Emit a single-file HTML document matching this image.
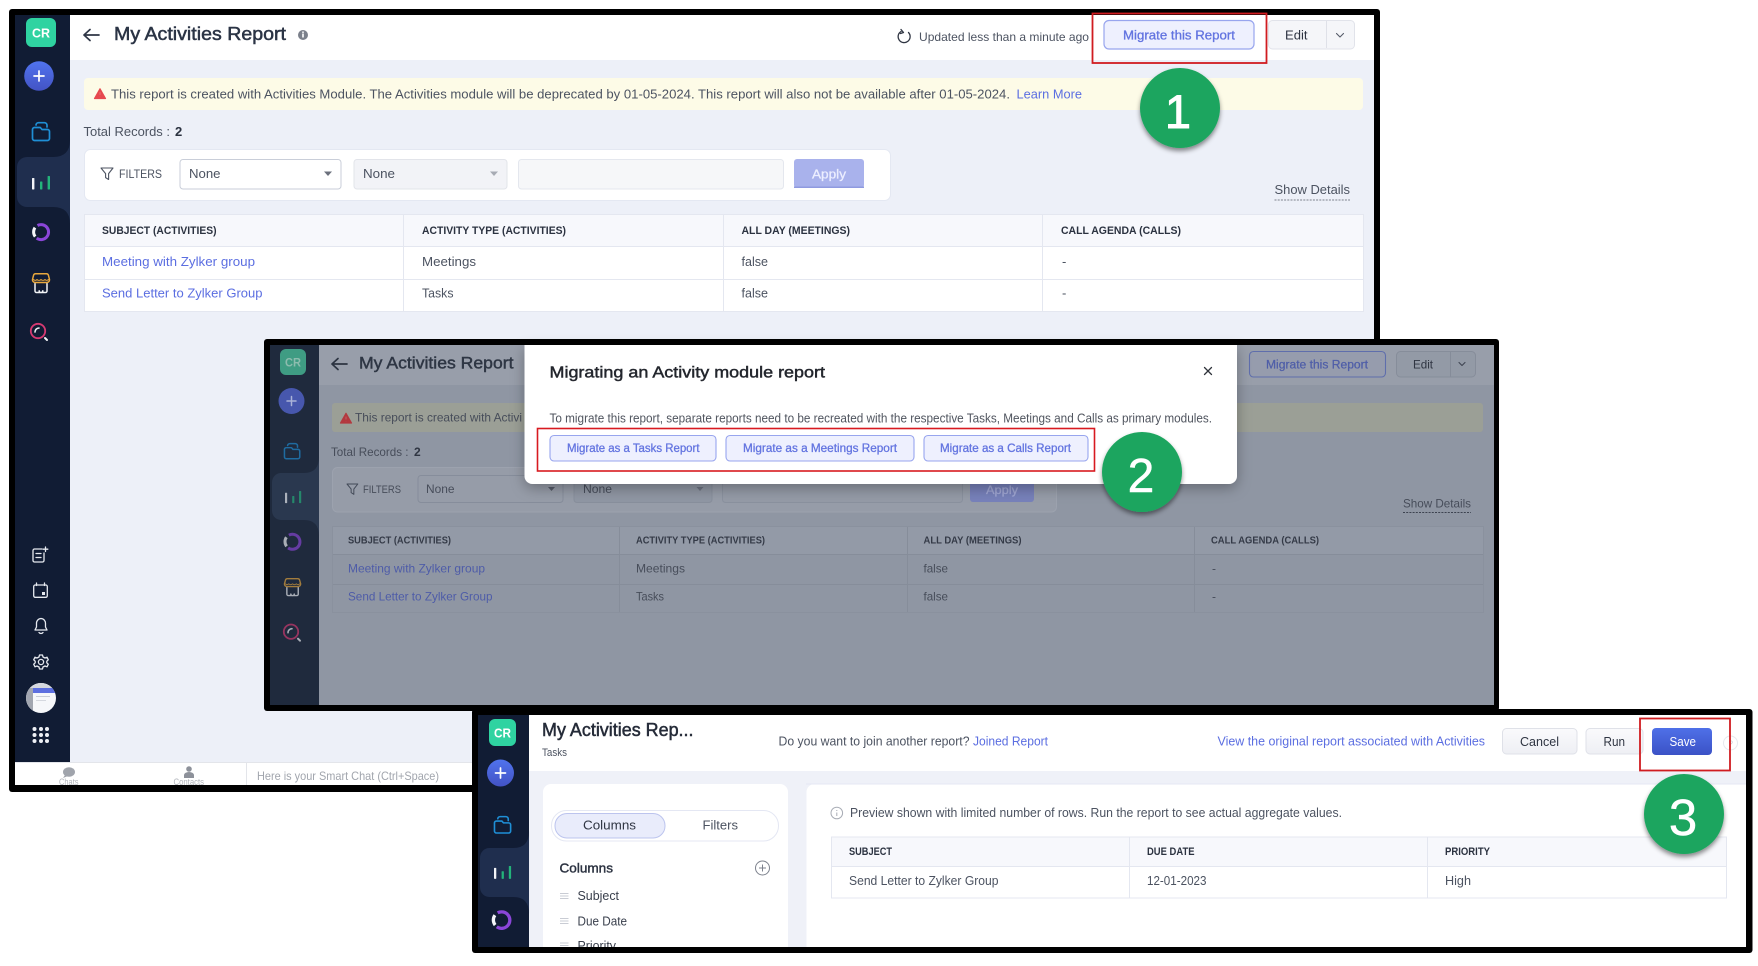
<!DOCTYPE html>
<html lang="en">
<head>
<meta charset="utf-8">
<title>Migrating an Activities report</title>
<style>
html,body{margin:0;padding:0;background:#fff;width:1758px;height:966px;overflow:hidden}
svg{display:block;filter:blur(.35px)}
text{font-family:"Liberation Sans",sans-serif;font-size:13px;fill:#4c5361}
.b{font-weight:700}
.h{font-weight:700;font-size:11px;fill:#2b3240}
.l{fill:#5b6ee1}
.s{font-size:12px}
.w{fill:#fff}
.dt{fill:#474d5a}
.dh{font-weight:700;font-size:10.5px;fill:#343a47}
.dl{fill:#4e5ca8}
.ln{fill:none;stroke-linecap:round;stroke-linejoin:round}
.btn{font-size:12.5px;fill:#6374e0;stroke:#6374e0;stroke-width:.3}
.num{fill:#fff;stroke:#fff;stroke-width:.9}
</style>
</head>
<body>
<svg width="1758" height="966" viewBox="0 0 1758 966" xmlns="http://www.w3.org/2000/svg">
<defs>
<linearGradient id="gp" x1="0" y1="0" x2="0" y2="1"><stop offset="0" stop-color="#5073ee"/><stop offset="1" stop-color="#4353c4"/></linearGradient>
<linearGradient id="gs" x1="0" y1="0" x2="0" y2="1"><stop offset="0" stop-color="#4f70e8"/><stop offset="1" stop-color="#3b52c6"/></linearGradient>
<linearGradient id="gb" x1="0" y1="0" x2="0" y2="1"><stop offset="0" stop-color="#fafafc"/><stop offset="1" stop-color="#eeeff4"/></linearGradient>
<filter id="sh" x="-30%" y="-30%" width="160%" height="170%"><feDropShadow dx="0" dy="3" stdDeviation="2.5" flood-color="#000" flood-opacity=".45"/></filter>
<filter id="ms" x="-10%" y="-20%" width="120%" height="150%"><feDropShadow dx="0" dy="4" stdDeviation="7" flood-color="#000" flood-opacity=".3"/></filter>

<path id="tab" d="M53 -17Q53 0 36 0H10A10 10 0 0 0 0 10V40A10 10 0 0 0 10 50H36Q53 50 53 67Z"/>
<g id="folder" class="ln" stroke="#1f8fd6" stroke-width="1.7">
  <path d="M2.5 18.5H15.5A2 2 0 0 0 17.5 16.5V9.5A2 2 0 0 0 15.5 7.5H10L8.3 5.5H2.5A2 2 0 0 0 .5 7.5V16.5A2 2 0 0 0 2.5 18.5Z"/>
  <path d="M4 3A2.5 2.5 0 0 1 6.5 .7H12.5A2.5 2.5 0 0 1 15 3.2V5"/>
</g>
<g id="bars">
  <rect x="0" y="2" width="2.4" height="11.5" rx=".6" fill="#f2f4f7"/>
  <rect x="8" y="5.5" width="2.4" height="8" rx=".6" fill="#23b37a"/>
  <rect x="15.6" y="0" width="2.4" height="13.5" rx=".6" fill="#23b37a"/>
</g>
<g id="donut" fill="none" stroke-width="3">
  <path d="M-3.5 -6.5A7.5 7.5 0 1 1 -4.3 6.2" stroke="#8b46d8"/>
  <path d="M-5.8 4.6A7.5 7.5 0 0 1 -6 -4.4" stroke="#f4f5f8"/>
</g>
<g id="store" class="ln" stroke-width="1.5">
  <path d="M3 10.5V18A1.5 1.5 0 0 0 4.5 19.5H13.5A1.5 1.5 0 0 0 15 18V10.5M7.2 19.5V17.8A1.8 1.8 0 0 0 10.8 17.8V19.5" stroke="#f2f4f7"/>
  <path d="M3.5 .8H14.5A2 2 0 0 1 16.4 2.2L17.5 6.5A2.8 2.8 0 0 1 15 9.5H3A2.8 2.8 0 0 1 .5 6.5L1.6 2.2A2 2 0 0 1 3.5 .8Z" stroke="#e9a83d"/>
  <path d="M1.5 6.5Q3.2 8.3 5 6.5Q7 8.3 9 6.5Q11 8.3 13 6.5Q14.8 8.3 16.5 6.5" stroke="#e9a83d" stroke-width="1"/>
</g>
<g id="search" class="ln">
  <circle cx="0" cy="0" r="7.2" stroke="#d83a72" stroke-width="1.8"/>
  <path d="M-3 1A4 4 0 0 1 1-3" stroke="#f3f4f7" stroke-width="1.6"/>
  <path d="M7 7L9 9" stroke="#f3f4f7" stroke-width="2"/>
</g>
<g id="warn"><path d="M6 .8L11.5 10.5H.5Z" stroke-linejoin="round" stroke-width="1.2"/><rect x="5.4" y="3.6" width="1.2" height="3.8" fill="#fff"/><rect x="5.4" y="8.2" width="1.2" height="1.2" fill="#fff"/></g>
<path id="arrow" class="ln" stroke-width="1.7" d="M0 0H15M0 0L6 -5.5M0 0L6 5.5"/>
<path id="funnel" class="ln" stroke-width="1.1" d="M0 0H12L7.6 5.6V11.5L4.6 9.6V5.6Z"/>
</defs>

<!-- white page -->
<rect width="1758" height="966" fill="#fff"/>

<!-- PANEL 1 -->
<rect x="9" y="9" width="1371" height="783" rx="3" fill="#000"/>
<rect x="15" y="15" width="1359" height="770" fill="#edf0f8"/>
<rect x="70" y="15" width="1304" height="45" fill="#fff"/>
<rect x="15" y="15" width="55" height="748" fill="#111c34"/>
<use href="#tab" x="17" y="157" fill="#1f2e4e"/>
<rect x="15" y="763" width="460" height="22" fill="#fff"/>
<rect x="15" y="762" width="460" height="1" fill="#e3e5ea"/>

<rect x="26" y="18" width="30" height="29" rx="6" fill="#2fd3a1"/>
<text x="32" y="37.5" class="b w" style="font-size:13px" textLength="18" lengthAdjust="spacingAndGlyphs">CR</text>
<circle cx="39" cy="76" r="14.8" fill="url(#gp)"/>
<path d="M39 71V81M34 76H44" stroke="#fff" stroke-width="1.7" stroke-linecap="round"/>
<use href="#folder" x="32" y="122"/>
<use href="#bars" x="32" y="176"/>
<use href="#donut" x="41" y="232"/>
<use href="#store" x="32" y="273"/>
<use href="#search" x="38" y="331"/>
<g class="ln" stroke="#e6e9ef" stroke-width="1.3">
  <path d="M42 549H34.5A1.5 1.5 0 0 0 33 550.5V560.5A1.5 1.5 0 0 0 34.5 562H42.5A1.5 1.5 0 0 0 44 560.5V553M36 553.5H41M36 557.5H41M45.5 547V551.5M43.2 549.2H47.8"/>
  <rect x="33.7" y="585" width="13.6" height="12.3" rx="1.5"/><path d="M36.5 583V585.5M44.5 583V585.5"/>
  <path d="M41 618.5A4.8 4.8 0 0 1 45.5 623.5V627L47 630H35L36.5 627V623.5A4.8 4.8 0 0 1 41 618.5ZM39 632.5A2.5 2.5 0 0 0 43 632.5"/>
  <circle cx="41" cy="662" r="2.6"/>
  <path d="M39.5 655H42.5L43 657L45 658L47 657.2L48.3 659.8L46.8 661.2V662.8L48.3 664.2L47 666.8L45 666L43 667L42.5 669H39.5L39 667L37 666L35 666.8L33.7 664.2L35.2 662.8V661.2L33.7 659.8L35 657.2L37 658L39 657Z"/>
</g>
<rect x="42" y="592" width="3" height="3" fill="#e6e9ef"/>
<clipPath id="av"><circle cx="41" cy="698" r="15"/></clipPath>
<g clip-path="url(#av)">
  <rect x="26" y="683" width="30" height="30" fill="#f6f7fa"/>
  <rect x="26" y="683" width="30" height="5" fill="#d5d8df"/>
  <rect x="26" y="688" width="7" height="25" fill="#a2a6b0"/>
  <rect x="33" y="688" width="23" height="5" fill="#5d6fe0"/>
  <rect x="36" y="696" width="14" height="1" fill="#c9cdd6"/>
  <rect x="36" y="700" width="10" height="1" fill="#d5d8df"/>
</g>
<g fill="#eef0f5"><circle cx="34.5" cy="729" r="2"/><circle cx="41" cy="729" r="2"/><circle cx="47" cy="729" r="2"/><circle cx="34.5" cy="735" r="2"/><circle cx="41" cy="735" r="2"/><circle cx="47" cy="735" r="2"/><circle cx="34.5" cy="741" r="2"/><circle cx="41" cy="741" r="2"/><circle cx="47" cy="741" r="2"/></g>

<ellipse cx="69" cy="772" rx="6" ry="4.8" fill="#a0a4ac"/><path d="M65 775L63 778L68 776Z" fill="#a0a4ac"/>
<text x="59" y="785" style="font-size:9px;fill:#b0b3ba" textLength="19.5" lengthAdjust="spacingAndGlyphs">Chats</text>
<circle cx="189" cy="769" r="2.8" fill="#8d919a"/><path d="M184 778V775A5 3 0 0 1 194 775V778Z" fill="#8d919a"/>
<text x="173.5" y="785" style="font-size:9px;fill:#b0b3ba" textLength="30.5" lengthAdjust="spacingAndGlyphs">Contacts</text>
<rect x="246" y="763" width="1" height="22" fill="#e3e5ea"/>
<text x="257" y="780" class="s" style="fill:#a1a5ad" textLength="182" lengthAdjust="spacingAndGlyphs">Here is your Smart Chat (Ctrl+Space)</text>

<use href="#arrow" x="84" y="35" stroke="#2e3646"/>
<text x="114" y="40" style="font-size:18px;fill:#2b3445;stroke:#2b3445;stroke-width:.5" textLength="172" lengthAdjust="spacingAndGlyphs">My Activities Report</text>
<circle cx="303" cy="35" r="5" fill="#7b808b"/><rect x="302.2" y="33.5" width="1.6" height="4" fill="#fff"/><rect x="302.2" y="31.5" width="1.6" height="1.4" fill="#fff"/>

<path class="ln" stroke="#2f3542" stroke-width="1.3" d="M901 31.5A6 6 0 1 0 908.5 32.5M901 29.5L903.5 32.5L900.5 33.5"/>
<text x="919" y="41" class="s" textLength="170" lengthAdjust="spacingAndGlyphs">Updated less than a minute ago</text>
<rect x="1104" y="20.5" width="150" height="28.5" rx="5" fill="#eef0fe" stroke="#98a5ee" stroke-width="1.2"/>
<text x="1123" y="39.5" class="btn" textLength="112" lengthAdjust="spacingAndGlyphs">Migrate this Report</text>
<rect x="1268.5" y="20.5" width="86" height="28.5" rx="4" fill="#f5f6f9" stroke="#e1e3ea"/>
<rect x="1326" y="21" width="1" height="27" fill="#dfe1e8"/>
<text x="1285" y="39.5" style="font-size:13px;fill:#2e3442" textLength="22.5" lengthAdjust="spacingAndGlyphs">Edit</text>
<path class="ln" stroke="#555b68" stroke-width="1.1" d="M1336.5 33.5L1340 37L1343.5 33.5"/>
<rect x="1092.5" y="13.5" width="174" height="49.5" fill="none" stroke="#d01c20" stroke-width="1.8"/>

<rect x="84" y="78" width="1279" height="32" rx="4" fill="#fdfbe7"/>
<use href="#warn" x="94" y="88" fill="#e6494e" stroke="#e6494e"/>
<text x="111" y="98.5" textLength="899" lengthAdjust="spacingAndGlyphs">This report is created with Activities Module. The Activities module will be deprecated by 01-05-2024. This report will also not be available after 01-05-2024.</text>
<text x="1016.5" y="98.5" class="l" textLength="65.5" lengthAdjust="spacingAndGlyphs">Learn More</text>

<text x="83.5" y="136" textLength="86.5" lengthAdjust="spacingAndGlyphs">Total Records :</text>
<text x="175" y="136" class="b" style="fill:#2b3240">2</text>

<rect x="84.5" y="149.5" width="806" height="51" rx="6" fill="#fff" stroke="#e4e8f2"/>
<use href="#funnel" x="101" y="168" stroke="#4c5361"/>
<text x="119" y="178" class="s" textLength="43" lengthAdjust="spacingAndGlyphs">FILTERS</text>
<rect x="180" y="159.5" width="161" height="29.5" rx="3" fill="#fff" stroke="#c9ced9"/>
<text x="189" y="178" style="font-size:13px" textLength="31.5" lengthAdjust="spacingAndGlyphs">None</text>
<path d="M324 171.5H332L328 176Z" fill="#6b707c"/>
<rect x="354" y="159.5" width="153" height="29.5" rx="3" fill="#f2f3f7" stroke="#e2e4ea"/>
<text x="363" y="178" style="font-size:13px" textLength="32" lengthAdjust="spacingAndGlyphs">None</text>
<path d="M490 171.5H498L494 176Z" fill="#a7abb4"/>
<rect x="518.5" y="159.5" width="265" height="29.5" rx="3" fill="#f6f7f9" stroke="#e4e7ee"/>
<rect x="794" y="159" width="70" height="29" rx="3" fill="#a9b2ec"/>
<rect x="794" y="186.5" width="70" height="1.5" fill="#8f9ae0"/>
<text x="812" y="178.5" style="font-size:13px;fill:#eceeff;stroke:#eceeff;stroke-width:.3" textLength="34" lengthAdjust="spacingAndGlyphs">Apply</text>
<text x="1274.5" y="194" textLength="75.5" lengthAdjust="spacingAndGlyphs">Show Details</text>
<path d="M1274.5 200H1350" stroke="#7d828d" stroke-dasharray="2 1.2"/>

<rect x="84.5" y="214.5" width="1279" height="97" fill="#fff" stroke="#e4e7f0"/>
<rect x="85" y="215" width="1278" height="31" fill="#f7f8fc"/>
<path d="M85 246.5H1363M85 279.5H1363M403.5 215V311M723.5 215V311M1042.5 215V311" stroke="#e4e7f0" fill="none"/>
<text x="102" y="234" class="h" textLength="114.5" lengthAdjust="spacingAndGlyphs">SUBJECT (ACTIVITIES)</text>
<text x="422" y="234" class="h" textLength="144" lengthAdjust="spacingAndGlyphs">ACTIVITY TYPE (ACTIVITIES)</text>
<text x="741.5" y="234" class="h" textLength="108.5" lengthAdjust="spacingAndGlyphs">ALL DAY (MEETINGS)</text>
<text x="1061" y="234" class="h" textLength="120" lengthAdjust="spacingAndGlyphs">CALL AGENDA (CALLS)</text>
<text x="102" y="266" class="l" textLength="153" lengthAdjust="spacingAndGlyphs">Meeting with Zylker group</text>
<text x="422" y="266" textLength="54" lengthAdjust="spacingAndGlyphs">Meetings</text>
<text x="741.5" y="266" textLength="26.5" lengthAdjust="spacingAndGlyphs">false</text>
<text x="1062" y="266">-</text>
<text x="102" y="297.5" class="l" textLength="160.5" lengthAdjust="spacingAndGlyphs">Send Letter to Zylker Group</text>
<text x="422" y="297.5" textLength="31.5" lengthAdjust="spacingAndGlyphs">Tasks</text>
<text x="741.5" y="297.5" textLength="26.5" lengthAdjust="spacingAndGlyphs">false</text>
<text x="1062" y="297.5">-</text>

<g filter="url(#sh)"><circle cx="1180" cy="108" r="40" fill="#1fa55f"/></g>
<text x="1178" y="128" text-anchor="middle" class="num" style="font-size:47px">1</text>

<!-- PANEL 2 -->
<rect x="264" y="339" width="1235" height="372" rx="3" fill="#000"/>
<rect x="270" y="345" width="1224" height="360" fill="#8f96a3"/>
<rect x="319" y="345" width="1175" height="40" fill="#989eaa"/>
<rect x="270" y="345" width="49" height="360" fill="#1f2a3d"/>
<use href="#tab" transform="translate(272 473) scale(.887 .94)" fill="#2a384f"/>
<rect x="280" y="349" width="26" height="26" rx="6" fill="#3f9c83"/>
<text x="285" y="366.5" class="b" style="font-size:12px;fill:#8dbcae" textLength="16" lengthAdjust="spacingAndGlyphs">CR</text>
<circle cx="291.5" cy="401" r="13" fill="#4757ad"/>
<path d="M291.5 396.5V405.5M287 401H296" stroke="#aab2d8" stroke-width="1.5" stroke-linecap="round"/>
<g opacity=".65">
  <use href="#folder" transform="translate(284 443) scale(.9 .85)"/>
  <use href="#bars" transform="translate(285 491) scale(.9)"/>
  <use href="#donut" x="292.4" y="541.7"/>
  <use href="#store" transform="translate(284 578) scale(.95 .9)"/>
  <use href="#search" x="291" y="631.7"/>
</g>
<use href="#arrow" x="332" y="364" stroke="#2c3442"/>
<text x="359" y="368.5" style="font-size:16.5px;fill:#2e3644;stroke:#2e3644;stroke-width:.45" textLength="154.5" lengthAdjust="spacingAndGlyphs">My Activities Report</text>

<rect x="332" y="403" width="1151" height="29" rx="3" fill="#9b9f96"/>
<use href="#warn" x="340" y="412.5" fill="#b3393f" stroke="#b3393f"/>
<text x="355" y="421.5" class="dt" style="font-size:12px" textLength="167" lengthAdjust="spacingAndGlyphs">This report is created with Activi</text>
<text x="331" y="456" class="dt" style="font-size:12px" textLength="77.5" lengthAdjust="spacingAndGlyphs">Total Records :</text>
<text x="414" y="456" class="b" style="font-size:12px;fill:#2f3542">2</text>

<rect x="332.5" y="467.5" width="724" height="44.5" rx="5" fill="#969ca8" stroke="#9ca2ae"/>
<use href="#funnel" transform="translate(347 484) scale(.9)" stroke="#434a58"/>
<text x="363" y="493" class="dt" style="font-size:11px" textLength="38" lengthAdjust="spacingAndGlyphs">FILTERS</text>
<rect x="418" y="475.5" width="145" height="27" rx="3" fill="#969ca8" stroke="#868d9b"/>
<text x="426" y="493" class="dt" style="font-size:12px" textLength="28.5" lengthAdjust="spacingAndGlyphs">None</text>
<path d="M548 487H555L551.5 491Z" fill="#555b68"/>
<rect x="574" y="475.5" width="138" height="27" rx="3" fill="#8f96a3" stroke="#888f9c"/>
<text x="583" y="493" class="dt" style="font-size:12px" textLength="29" lengthAdjust="spacingAndGlyphs">None</text>
<path d="M696.5 487H703.5L700 491Z" fill="#6c7280"/>
<rect x="722.5" y="475.5" width="240" height="27" rx="3" fill="#949aa6" stroke="#8a919e"/>
<rect x="970" y="475" width="64" height="27" rx="3" fill="#7781ba"/>
<text x="986" y="494" style="font-size:12px;fill:#a1a7d3;stroke:#a1a7d3;stroke-width:.25" textLength="32" lengthAdjust="spacingAndGlyphs">Apply</text>
<text x="1403" y="507.5" class="dt" style="font-size:12px" textLength="68" lengthAdjust="spacingAndGlyphs">Show Details</text>
<path d="M1403 512.5H1471" stroke="#3d4350" stroke-dasharray="2 1.2"/>

<rect x="332.5" y="526.5" width="1151" height="86" fill="#8f96a3" stroke="#8a919e"/>
<rect x="333" y="527" width="1150" height="27" fill="#939aa7"/>
<path d="M333 554.5H1483M333 584.5H1483M619.5 527V612M907.5 527V612M1194.5 527V612" stroke="#868d9a" fill="none"/>
<text x="348" y="543.5" class="dh" textLength="103" lengthAdjust="spacingAndGlyphs">SUBJECT (ACTIVITIES)</text>
<text x="636" y="543.5" class="dh" textLength="129" lengthAdjust="spacingAndGlyphs">ACTIVITY TYPE (ACTIVITIES)</text>
<text x="923.5" y="543.5" class="dh" textLength="98" lengthAdjust="spacingAndGlyphs">ALL DAY (MEETINGS)</text>
<text x="1211" y="543.5" class="dh" textLength="108" lengthAdjust="spacingAndGlyphs">CALL AGENDA (CALLS)</text>
<text x="348" y="572.5" class="dl" style="font-size:12px" textLength="137" lengthAdjust="spacingAndGlyphs">Meeting with Zylker group</text>
<text x="636" y="572.5" class="dt" style="font-size:12px" textLength="49" lengthAdjust="spacingAndGlyphs">Meetings</text>
<text x="923.5" y="572.5" class="dt" style="font-size:12px" textLength="24.5" lengthAdjust="spacingAndGlyphs">false</text>
<text x="1212" y="572.5" class="dt" style="font-size:12px">-</text>
<text x="348" y="600.5" class="dl" style="font-size:12px" textLength="144.5" lengthAdjust="spacingAndGlyphs">Send Letter to Zylker Group</text>
<text x="636" y="600.5" class="dt" style="font-size:12px" textLength="28" lengthAdjust="spacingAndGlyphs">Tasks</text>
<text x="923.5" y="600.5" class="dt" style="font-size:12px" textLength="24.5" lengthAdjust="spacingAndGlyphs">false</text>
<text x="1212" y="600.5" class="dt" style="font-size:12px">-</text>

<rect x="1249.5" y="351.5" width="136" height="25.5" rx="4" fill="#969cad" stroke="#5f6eac" stroke-width="1.1"/>
<text x="1266" y="368.5" style="font-size:11.5px;fill:#4f5ea8;stroke:#4f5ea8;stroke-width:.25" textLength="102" lengthAdjust="spacingAndGlyphs">Migrate this Report</text>
<rect x="1396.5" y="351.5" width="79" height="25.5" rx="4" fill="#939aa6" stroke="#868d9a"/>
<rect x="1450" y="352" width="1" height="24.5" fill="#858c99"/>
<text x="1413" y="368.5" class="dt" style="font-size:12px;fill:#2f3542" textLength="20" lengthAdjust="spacingAndGlyphs">Edit</text>
<path class="ln" stroke="#3f4552" stroke-width="1.1" d="M1459 362.5L1462 365.5L1465 362.5"/>

<g filter="url(#ms)"><path d="M524.5 345H1237V476A8 8 0 0 1 1229 484H532.5A8 8 0 0 1 524.5 476Z" fill="#fff"/></g>
<text x="549.5" y="377.5" style="font-size:16px;fill:#23262d;stroke:#23262d;stroke-width:.45" textLength="275.5" lengthAdjust="spacingAndGlyphs">Migrating an Activity module report</text>
<path class="ln" stroke="#30343c" stroke-width="1.3" d="M1204.5 367.5L1211.5 374.5M1211.5 367.5L1204.5 374.5"/>
<text x="549.5" y="422.5" style="font-size:12.5px;fill:#50555f" textLength="662.5" lengthAdjust="spacingAndGlyphs">To migrate this report, separate reports need to be recreated with the respective Tasks, Meetings and Calls as primary modules.</text>
<rect x="550" y="435.5" width="166" height="25.5" rx="4" fill="#eef0fe" stroke="#98a5ee" stroke-width="1.1"/>
<text x="567" y="452" class="btn" style="font-size:12px" textLength="132.5" lengthAdjust="spacingAndGlyphs">Migrate as a Tasks Report</text>
<rect x="726" y="435.5" width="188" height="25.5" rx="4" fill="#eef0fe" stroke="#98a5ee" stroke-width="1.1"/>
<text x="743" y="452" class="btn" style="font-size:12px" textLength="154" lengthAdjust="spacingAndGlyphs">Migrate as a Meetings Report</text>
<rect x="924" y="435.5" width="164" height="25.5" rx="4" fill="#eef0fe" stroke="#98a5ee" stroke-width="1.1"/>
<text x="940" y="452" class="btn" style="font-size:12px" textLength="131" lengthAdjust="spacingAndGlyphs">Migrate as a Calls Report</text>
<rect x="537.5" y="428.5" width="557" height="42.5" fill="none" stroke="#d81a20" stroke-width="1.6"/>

<g filter="url(#sh)"><circle cx="1142" cy="472" r="40" fill="#1fa55f"/></g>
<text x="1141" y="492" text-anchor="middle" class="num" style="font-size:48px;stroke-width:.5">2</text>

<!-- PANEL 3 -->
<rect x="472" y="709" width="1280.5" height="244" rx="3" fill="#000"/>
<rect x="478" y="715" width="1268" height="232" fill="#eff1f8"/>
<rect x="529" y="715" width="1217" height="56" fill="#fff"/>
<rect x="478" y="715" width="51" height="232" fill="#111c34"/>
<use href="#tab" transform="translate(480 848) scale(.925 .98)" fill="#1f2e4e"/>
<rect x="489" y="719" width="27" height="27" rx="6" fill="#2fd3a1"/>
<text x="494" y="737.5" class="b w" style="font-size:13px" textLength="17" lengthAdjust="spacingAndGlyphs">CR</text>
<circle cx="500.5" cy="773" r="13.5" fill="url(#gp)"/>
<path d="M500.5 768V778M495.5 773H505.5" stroke="#fff" stroke-width="1.7" stroke-linecap="round"/>
<use href="#folder" transform="translate(494 816) scale(.95 .92)"/>
<use href="#bars" transform="translate(494 866) scale(.95)"/>
<use href="#donut" transform="translate(501.5 920) scale(1.1)"/>

<text x="542" y="736" style="font-size:18px;fill:#252b38;stroke:#252b38;stroke-width:.5" textLength="151.5" lengthAdjust="spacingAndGlyphs">My Activities Rep...</text>
<text x="542" y="756" style="font-size:11px" textLength="25" lengthAdjust="spacingAndGlyphs">Tasks</text>
<text x="778.5" y="745.5" textLength="191" lengthAdjust="spacingAndGlyphs" style="font-size:12.5px">Do you want to join another report?</text>
<text x="973" y="745.5" class="l" textLength="75" lengthAdjust="spacingAndGlyphs" style="font-size:12.5px">Joined Report</text>
<text x="1217.5" y="745.5" class="l" textLength="267.5" lengthAdjust="spacingAndGlyphs" style="font-size:12.5px">View the original report associated with Activities</text>
<rect x="1502.5" y="728.5" width="74.5" height="25.5" rx="4" fill="url(#gb)" stroke="#dfe1e8"/>
<text x="1520" y="746" style="font-size:12.5px;fill:#2f3542" textLength="39" lengthAdjust="spacingAndGlyphs">Cancel</text>
<rect x="1586" y="728.5" width="57" height="25.5" rx="4" fill="url(#gb)" stroke="#dfe1e8"/>
<text x="1603.5" y="746" style="font-size:12.5px;fill:#2f3542" textLength="21.5" lengthAdjust="spacingAndGlyphs">Run</text>
<rect x="1652" y="728" width="60" height="27" rx="4" fill="url(#gs)"/>
<text x="1669.5" y="746" class="w" style="font-size:12.5px" textLength="26.5" lengthAdjust="spacingAndGlyphs">Save</text>
<circle cx="1730.5" cy="743" r="7" fill="none" stroke="#e6e8ee"/>
<text x="1728.5" y="746.5" style="font-size:8px;fill:#c9ccd4">?</text>
<rect x="1640" y="718.5" width="90" height="52" fill="none" stroke="#d01c20" stroke-width="1.8"/>

<path d="M543 947V792A8 8 0 0 1 551 784H780A8 8 0 0 1 788 792V947Z" fill="#fff"/>
<rect x="551.5" y="810.5" width="227" height="30.5" rx="15" fill="#fff" stroke="#e4e7f3"/>
<rect x="555" y="813.5" width="110" height="24.5" rx="12" fill="#e9ecfb" stroke="#bcc4ee"/>
<text x="583" y="829.5" style="font-size:13px;fill:#2f3542" textLength="53" lengthAdjust="spacingAndGlyphs">Columns</text>
<text x="702.5" y="829.5" style="font-size:13px" textLength="35.5" lengthAdjust="spacingAndGlyphs">Filters</text>
<text x="559.5" y="872.5" style="font-size:13px;fill:#2b3240;stroke:#2b3240;stroke-width:.4" textLength="53.5" lengthAdjust="spacingAndGlyphs">Columns</text>
<circle cx="762.5" cy="868" r="7" fill="none" stroke="#7c818c"/>
<path d="M762.5 864.5V871.5M759 868H766" stroke="#7c818c"/>
<path d="M560 893.5H568.5M560 896H568.5M560 898.5H568.5M560 918.5H568.5M560 921H568.5M560 923.5H568.5M560 943H568.5M560 945.5H568.5" stroke="#c9ccd4" fill="none"/>
<text x="577.5" y="900" style="font-size:12.5px;fill:#3a404d" textLength="41.5" lengthAdjust="spacingAndGlyphs">Subject</text>
<text x="577.5" y="925.5" style="font-size:12.5px;fill:#3a404d" textLength="49.5" lengthAdjust="spacingAndGlyphs">Due Date</text>
<text x="577.5" y="950" style="font-size:12.5px;fill:#3a404d" textLength="38.5" lengthAdjust="spacingAndGlyphs">Priority</text>
<rect x="478" y="947" width="1268" height="6" fill="#000"/>

<path d="M806.5 947V792A8 8 0 0 1 814.5 784H1746V947Z" fill="#fff"/>
<path d="M806 784H1746" stroke="#e4e7f3"/>
<circle cx="836.8" cy="813" r="5.8" fill="none" stroke="#a8acb5"/>
<path d="M836.8 812.5V816M836.8 810V811" stroke="#a8acb5"/>
<text x="850" y="817" style="font-size:12.5px" textLength="492" lengthAdjust="spacingAndGlyphs">Preview shown with limited number of rows. Run the report to see actual aggregate values.</text>
<rect x="831.5" y="837" width="895" height="61" fill="#fff" stroke="#e4e7f0"/>
<rect x="832" y="837.5" width="894" height="28.5" fill="#f7f8fc"/>
<path d="M832 866.5H1726M1129.5 837.5V897.5M1427.5 837.5V897.5" stroke="#e4e7f0" fill="none"/>
<text x="849" y="855" class="h" textLength="43" lengthAdjust="spacingAndGlyphs">SUBJECT</text>
<text x="1147" y="855" class="h" textLength="47.5" lengthAdjust="spacingAndGlyphs">DUE DATE</text>
<text x="1445" y="855" class="h" textLength="45" lengthAdjust="spacingAndGlyphs">PRIORITY</text>
<text x="849" y="885" style="font-size:12.5px" textLength="149.5" lengthAdjust="spacingAndGlyphs">Send Letter to Zylker Group</text>
<text x="1147" y="885" style="font-size:12.5px" textLength="59.5" lengthAdjust="spacingAndGlyphs">12-01-2023</text>
<text x="1445" y="885" style="font-size:12.5px" textLength="26" lengthAdjust="spacingAndGlyphs">High</text>

<g filter="url(#sh)"><circle cx="1684" cy="814" r="40" fill="#1fa55f"/></g>
<text x="1683" y="835" text-anchor="middle" class="num" style="font-size:51px;stroke-width:.5">3</text>
</svg>
</body>
</html>
